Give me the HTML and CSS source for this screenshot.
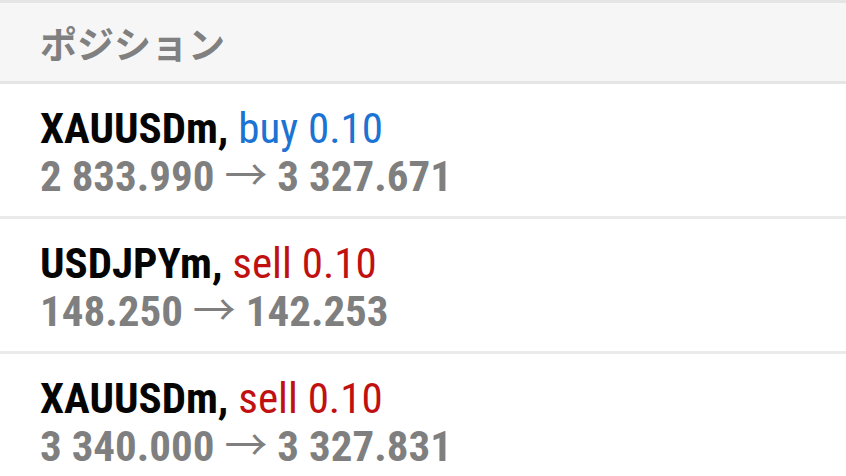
FILE: index.html
```html
<!DOCTYPE html>
<html lang="ja">
<head>
<meta charset="utf-8">
<title>ポジション</title>
<link rel="stylesheet" href="styles.css">
</head>
<body>
<div class="screen">
  <div class="section-header">
    <span class="section-title">ポジション</span>
  </div>
  <ul class="positions">
    <li class="position">
      <div class="position-head"><span class="symbol">XAUUSDm,</span> <span class="side buy">buy 0.10</span></div>
      <div class="position-prices">2 833.990 <span class="arrow">→</span> 3 327.671</div>
    </li>
    <li class="position">
      <div class="position-head"><span class="symbol">USDJPYm,</span> <span class="side sell">sell 0.10</span></div>
      <div class="position-prices">148.250 <span class="arrow">→</span> 142.253</div>
    </li>
    <li class="position">
      <div class="position-head"><span class="symbol">XAUUSDm,</span> <span class="side sell">sell 0.10</span></div>
      <div class="position-prices">3 340.000 <span class="arrow">→</span> 3 327.831</div>
    </li>
  </ul>
</div>
</body>
</html>
```
FILE: styles.css
```css
* { box-sizing: border-box; }
html, body { margin: 0; padding: 0; background: #ffffff; }
body { font-family: "Roboto Condensed", Roboto, "Noto Sans CJK JP", sans-serif; }
.screen { width: 846px; height: 476px; overflow: hidden; background: #ffffff; }

.section-header {
  height: 84px;
  background: #f6f6f6;
  border-top: 3px solid #e5e5e5;
  border-bottom: 3px solid #e5e5e5;
  display: flex;
  align-items: center;
  padding: 3px 40px 0 40px;
}
.section-title {
  font-family: "Noto Sans CJK JP", sans-serif;
  font-weight: 700;
  font-size: 37px;
  line-height: 1;
  color: #808080;
}

.positions { list-style: none; margin: 0; padding: 0; }
.position {
  height: 135px;
  padding: 20px 40px 0 40px;
  border-bottom: 3px solid #eaeaea;
}
.position-head {
  font-size: 43px;
  line-height: 48px;
  white-space: nowrap;
}
.symbol { font-weight: 700; color: #050505; }
.side { font-weight: 400; }
.buy { color: #1b73d3; }
.sell { color: #c01010; }
.position-prices {
  font-size: 43px;
  line-height: 49px;
  font-weight: 700;
  color: #7f7f7f;
  white-space: nowrap;
}
.arrow { font-weight: 400; }
```
